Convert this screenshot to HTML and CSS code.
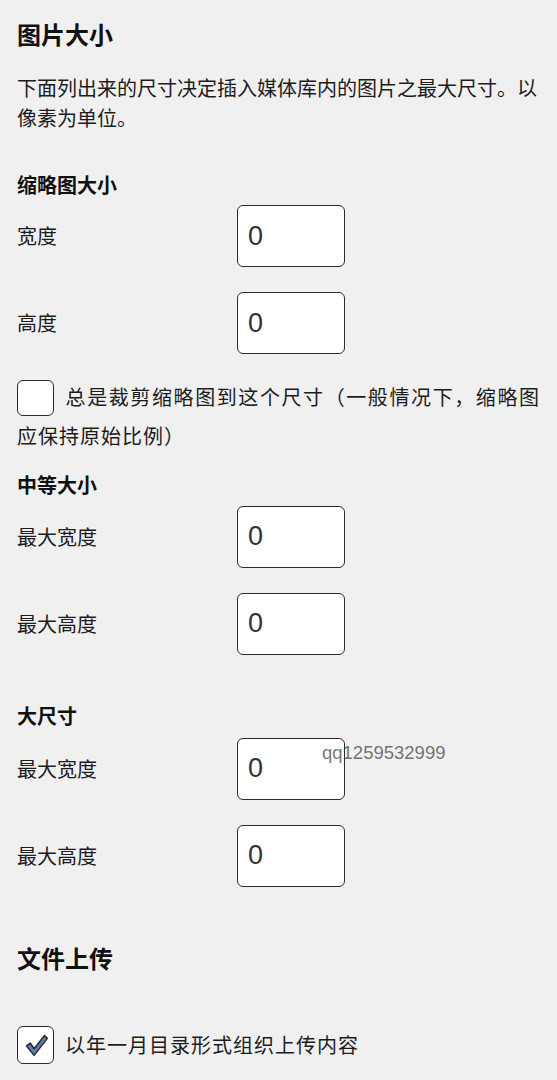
FILE: index.html
```html
<!DOCTYPE html>
<html lang="zh-CN">
<head>
<meta charset="utf-8">
<title>图片大小</title>
<link rel="stylesheet" href="styles.css">
</head>
<body>
<div class="page">
  <h2 class="title">图片大小</h2>
  <p class="desc">下面列出来的尺寸决定插入媒体库内的图片之最大尺寸。以像素为单位。</p>

  <h3 class="sub sub-thumb">缩略图大小</h3>
  <div class="fields fields-thumb">
    <div class="field"><span class="label">宽度</span><input class="num" type="text" value="0"></div>
    <div class="field"><span class="label">高度</span><input class="num" type="text" value="0"></div>
  </div>
  <p class="check check-crop"><span class="box"></span>总是裁剪缩略图到这个尺寸（一般情况下，缩略图应保持原始比例）</p>

  <h3 class="sub sub-medium">中等大小</h3>
  <div class="fields fields-medium">
    <div class="field"><span class="label">最大宽度</span><input class="num" type="text" value="0"></div>
    <div class="field"><span class="label">最大高度</span><input class="num" type="text" value="0"></div>
  </div>

  <h3 class="sub sub-large">大尺寸</h3>
  <div class="fields fields-large">
    <div class="field"><span class="label">最大宽度</span><input class="num" type="text" value="0"></div>
    <div class="field"><span class="label">最大高度</span><input class="num" type="text" value="0"></div>
  </div>

  <h2 class="title title-upload">文件上传</h2>
  <p class="check check-upload"><span class="box box-checked"><svg viewBox="0 0 36 36" width="34" height="34"><path d="M8 19 L12 16 L16 22 L27 8 L30 11 L16 29 Z" fill="#5d7fb8" stroke="#2a2a2a" stroke-width="1.6" stroke-linejoin="round"/></svg></span>以年一月目录形式组织上传内容</p>
</div>
<div class="watermark">qq1259532999</div>
</body>
</html>
```

FILE: styles.css
```css
html, body {
  margin: 0;
  padding: 0;
  background: #f0f0f0;
}
body {
  position: relative;
  font-family: "Noto Sans CJK SC", "Noto Sans", sans-serif;
  color: #1c1c1c;
}
.page {
  padding: 19px 17px 0 17px;
}
.title {
  margin: 0;
  font-size: 24px;
  line-height: 30px;
  font-weight: bold;
  color: #111;
}
.title-upload {
  margin-top: 56px;
}
.desc {
  margin: 24px 0 0;
  font-size: 20px;
  line-height: 30px;
}
.sub {
  margin: 0;
  font-size: 20px;
  line-height: 30px;
  font-weight: bold;
  color: #111;
}
.sub-thumb { margin-top: 37px; }
.sub-medium { margin-top: 16px; }
.sub-large { margin-top: 46px; }

.fields {
  display: flex;
  flex-direction: column;
  gap: 25px;
}
.fields-thumb { margin-top: 5px; }
.fields-medium { margin-top: 6px; }
.fields-large { margin-top: 7px; }

.field {
  display: flex;
  align-items: center;
  height: 62px;
}
.label {
  width: 220px;
  font-size: 20px;
  line-height: 30px;
}
.num {
  box-sizing: border-box;
  width: 108px;
  height: 62px;
  margin: 0;
  padding: 0 10px;
  border: 1.5px solid #2b2b2b;
  border-radius: 6px;
  background: #fff;
  font-family: "Liberation Sans", Arial, sans-serif;
  font-size: 27px;
  color: #333;
  outline: none;
}

.check {
  margin: 0;
  font-size: 20px;
  letter-spacing: 1px;
  text-align: justify;
}
.check-crop {
  margin-top: 25px;
  line-height: 36px;
}
.check-upload {
  margin-top: 53px;
  line-height: 38px;
}
.box {
  display: inline-block;
  box-sizing: border-box;
  width: 37px;
  height: 36px;
  margin-right: 11px;
  border: 1.5px solid #2b2b2b;
  border-radius: 6px;
  background: #fff;
  vertical-align: middle;
  position: relative;
  top: -2px;
}
.box-checked {
  height: 38px;
  display: inline-flex;
  align-items: center;
  justify-content: center;
  letter-spacing: 0;
}
.box-checked svg {
  display: block;
}

.watermark {
  position: absolute;
  left: 322px;
  top: 742px;
  font-family: "Liberation Sans", Arial, sans-serif;
  font-size: 18.5px;
  line-height: 22px;
  color: rgba(70, 70, 70, 0.75);
}
```
